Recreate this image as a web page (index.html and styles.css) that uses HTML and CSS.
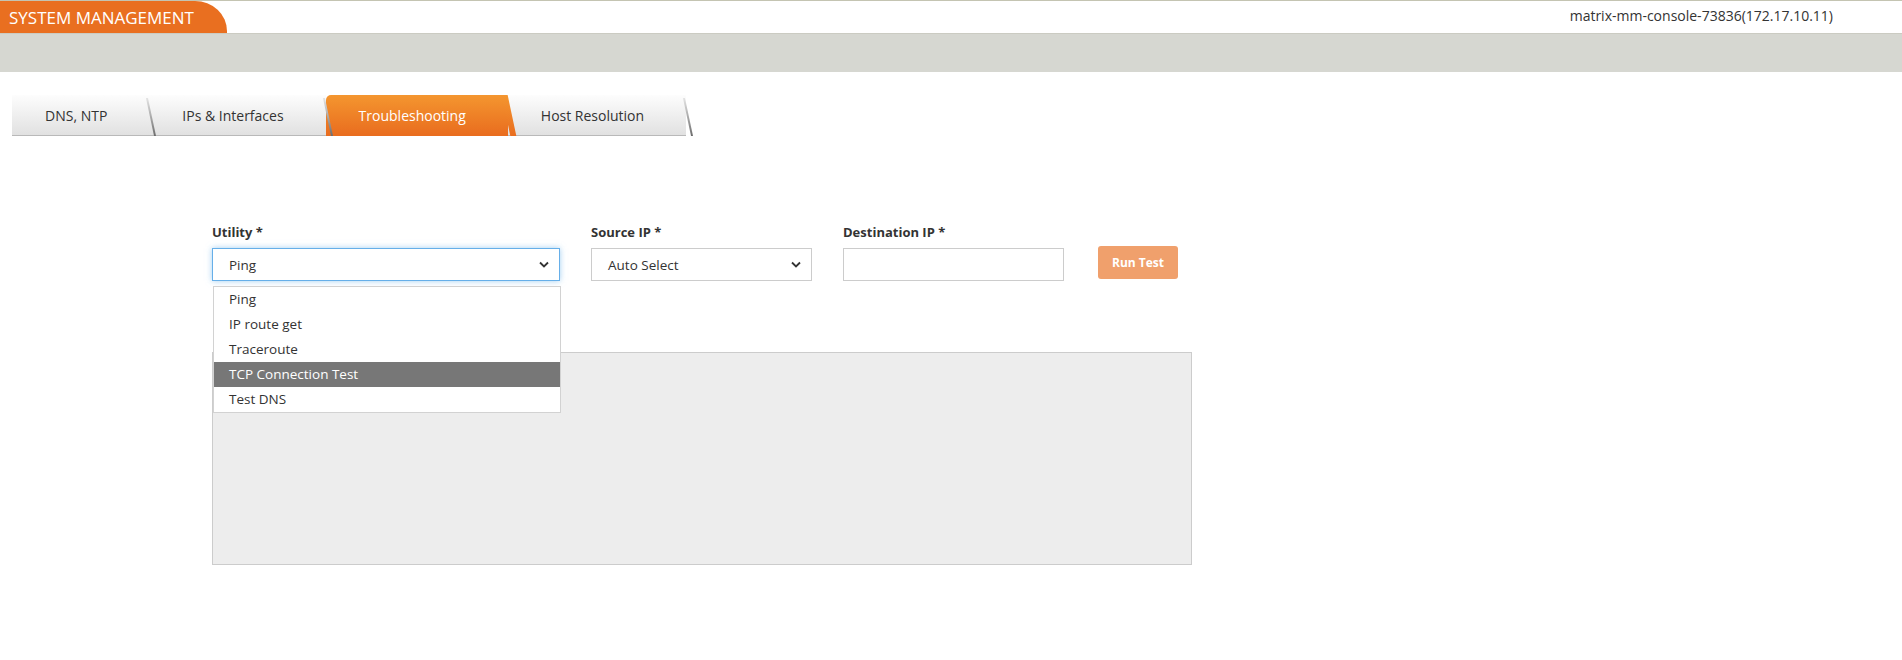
FILE: index.html
```html
<!DOCTYPE html>
<html lang="en">
<head>
    <meta charset="UTF-8">
    <title>System Management - Troubleshooting</title>
    <link rel="stylesheet" href="styles.css">
</head>
<body>
    <header class="topbar">
        <div class="brand">SYSTEM MANAGEMENT</div>
        <div class="host">matrix-mm-console-73836(172.17.10.11)</div>
    </header>
    <div class="subbar"></div>

    <nav class="tabs">
        <a class="tab">DNS, NTP</a>
        <a class="tab">IPs &amp; Interfaces</a>
        <a class="tab active">Troubleshooting</a>
        <a class="tab">Host Resolution</a>
    </nav>

    <main class="content">
        <div class="form-row">
            <div class="field utility">
                <label>Utility *</label>
                <div class="select focused">
                    <span>Ping</span>
                    <svg class="chevron" width="10" height="7" viewBox="0 0 10 7"><path d="M1 1.5 L5 5.5 L9 1.5" fill="none" stroke="#333" stroke-width="1.8"/></svg>
                </div>
                <ul class="options">
                    <li>Ping</li>
                    <li>IP route get</li>
                    <li>Traceroute</li>
                    <li class="hover">TCP Connection Test</li>
                    <li>Test DNS</li>
                </ul>
            </div>
            <div class="field source">
                <label>Source IP *</label>
                <div class="select">
                    <span>Auto Select</span>
                    <svg class="chevron" width="10" height="7" viewBox="0 0 10 7"><path d="M1 1.5 L5 5.5 L9 1.5" fill="none" stroke="#333" stroke-width="1.8"/></svg>
                </div>
            </div>
            <div class="field dest">
                <label>Destination IP *</label>
                <input type="text" class="text-input">
            </div>
            <button class="run-btn" disabled>Run Test</button>
        </div>
        <div class="output"></div>
    </main>
</body>
</html>
```

FILE: styles.css
```css
body {
    margin: 0;
    font-family: "Open Sans", "Noto Sans", sans-serif;
    color: #333;
    background: #fff;
}

.topbar {
    display: flex;
    justify-content: space-between;
    align-items: stretch;
    height: 32px;
    border-top: 1px solid #c4c4b2;
    border-bottom: 1px solid #cbcbc2;
}

.brand {
    width: 227px;
    padding-left: 9px;
    padding-top: 4px;
    box-sizing: border-box;
    background: #e96f20;
    color: #fff;
    font-size: 17px;
    line-height: 26px;
    border-top-right-radius: 32px 30px;
}

.host {
    padding-right: 69px;
    font-size: 14px;
    line-height: 30px;
    color: #333;
}

.subbar {
    height: 38px;
    background: #d6d7d1;
}

.tabs {
    display: flex;
    margin: 23px 0 0 12px;
}

.tab {
    position: relative;
    height: 40px;
    padding: 0 42px 0 33px;
    display: flex;
    align-items: center;
    font-size: 14px;
    color: #333;
    background: linear-gradient(#fdfdfd, #e1e1e1);
    border-bottom: 1px solid #b9b9b9;
    cursor: pointer;
}

.tab::after {
    content: "";
    position: absolute;
    top: 3px;
    right: -3px;
    bottom: -1px;
    width: 2px;
    background: linear-gradient(#e4e4e4, #6d6d6d);
    transform: skewX(12deg);
    z-index: 2;
}

.tab.active {
    color: #fff;
    background: linear-gradient(#f4962f, #e96d1f);
    border-bottom-color: #e96d1f;
    border-top-left-radius: 5px;
    border-top-right-radius: 5px;
}

.tab.active::after {
    background: linear-gradient(#f4962f, #e96d1f);
    width: 6px;
    right: -4px;
    top: 0;
}

.content {
    padding: 88px 0 0 212px;
}

.form-row {
    display: flex;
    align-items: flex-end;
}

.field {
    position: relative;
    display: flex;
    flex-direction: column;
    margin-right: 31px;
}

.field label {
    font-size: 13px;
    font-weight: bold;
    line-height: 17px;
    margin-bottom: 7px;
    color: #333;
}

.utility { width: 348px; }
.source { width: 221px; }
.dest { width: 221px; margin-right: 34px; }

.select {
    height: 33px;
    box-sizing: border-box;
    border: 1px solid #ccc;
    display: flex;
    align-items: center;
    justify-content: space-between;
    padding: 0 10px 0 16px;
    font-size: 13.5px;
    color: #333;
    background: #fff;
}

.select.focused {
    border-color: #66afe9;
    box-shadow: 0 0 6px rgba(102, 175, 233, 0.6);
}

.text-input {
    height: 33px;
    box-sizing: border-box;
    border: 1px solid #ccc;
    margin: 0;
    padding: 0 10px;
}

.options {
    position: absolute;
    top: 62px;
    left: 1px;
    right: -1px;
    margin: 0;
    padding: 0;
    list-style: none;
    background: #fff;
    border: 1px solid #d2d2d2;
    z-index: 5;
}

.options li {
    height: 25px;
    line-height: 25px;
    padding-left: 15px;
    font-size: 13.5px;
    color: #333;
}

.options li.hover {
    background: #777;
    color: #fff;
}

.run-btn {
    width: 80px;
    height: 33px;
    margin-bottom: 2px;
    border: none;
    border-radius: 3px;
    background: #f0a06c;
    color: #fff;
    font-family: inherit;
    font-weight: bold;
    font-size: 12px;
}

.output {
    width: 980px;
    height: 213px;
    box-sizing: border-box;
    margin-top: 71px;
    background: #ededed;
    border: 1px solid #ccc;
}
```
